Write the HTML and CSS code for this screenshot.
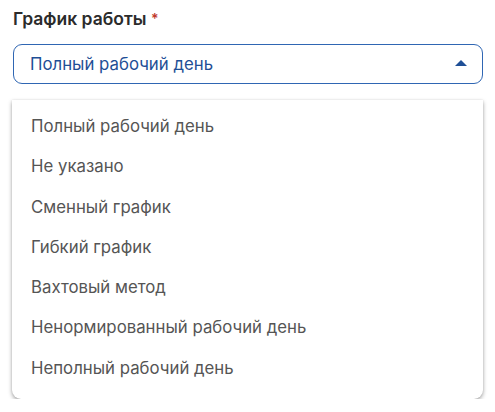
FILE: index.html
```html
<!DOCTYPE html>
<html lang="ru">
<head>
<meta charset="utf-8">
<link rel="stylesheet" href="styles.css">
</head>
<body>
<div class="field">
  <div class="label">График работы <span class="req">*</span></div>
  <div class="select">
    <span class="value">Полный рабочий день</span>
    <svg class="arrow" width="12" height="6" viewBox="0 0 12 6"><path d="M0 6 L6 0 L12 6 Z" fill="#1f4f96"/></svg>
  </div>
  <ul class="menu">
    <li>Полный рабочий день</li>
    <li>Не указано</li>
    <li>Сменный график</li>
    <li>Гибкий график</li>
    <li>Вахтовый метод</li>
    <li>Ненормированный рабочий день</li>
    <li>Неполный рабочий день</li>
  </ul>
</div>
</body>
</html>
```
FILE: styles.css
```css
html, body { margin: 0; padding: 0; background: #fff; }
body { font-family: Inter, "Noto Sans", sans-serif; }
.field { padding: 6px 12px 0 13px; width: 470px; }
.label { font-size: 17.5px; font-weight: 600; color: #2b2b2b; height: 26px; line-height: 26px; }
.req { color: #c0392b; font-size: 14px; vertical-align: top; }
.select {
  margin-top: 12px; height: 38px; border: 1px solid #2f66b3; border-radius: 9px;
  display: flex; align-items: center; justify-content: space-between; padding: 0 15px 0 16px;
}
.value { font-size: 16.8px; color: #1f4f96; }
.arrow { margin-top: -2px; }
.menu {
  list-style: none; margin: 16px 0 0 -1px; padding: 6px 0 11px;
  border-radius: 0 0 9px 9px; box-shadow: 0 2px 4px rgba(0,0,0,0.35), 0 0 2px rgba(0,0,0,0.1);
}
.menu li { font-size: 16.8px; color: #555; height: 40.3px; line-height: 40.3px; padding-left: 19px; }
```
